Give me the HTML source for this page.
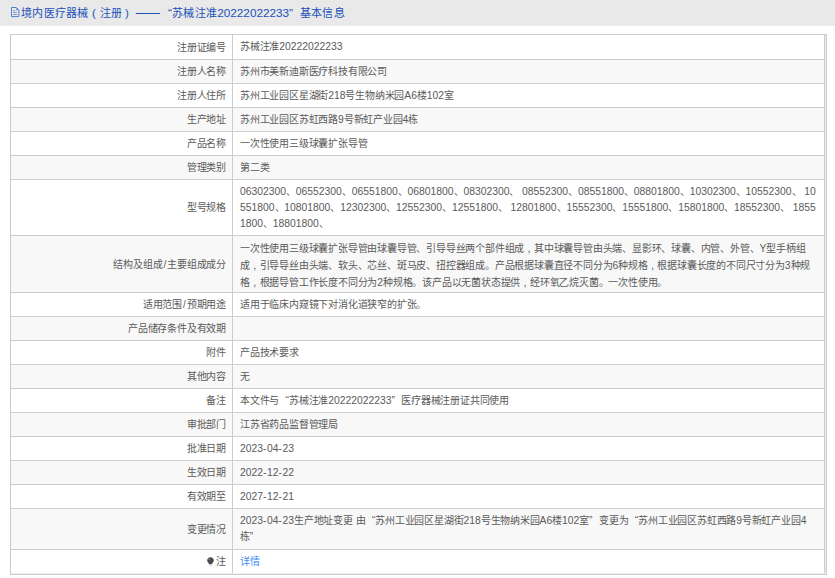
<!DOCTYPE html>
<html lang="zh-CN"><head><meta charset="utf-8">
<style>
html,body{margin:0;padding:0;background:#fff;width:835px;height:578px;overflow:hidden;position:relative;font-family:"Liberation Sans",sans-serif;}
.hdr{position:absolute;left:0;top:0;width:835px;height:25px;background:#e9e9e9;}
.hdr .doc{position:absolute;left:11px;top:7px;}
.hdr .t{position:absolute;left:21px;top:0;height:25px;line-height:25px;font-size:11px;letter-spacing:0.3px;color:#1a50ba;white-space:nowrap;}
.hdr .t .a{font-size:11.75px;letter-spacing:0;}
.hdr .t .ql,.hdr .t .qr{display:inline-block;width:10.6px;font-size:11.65px;letter-spacing:0;}
.hdr .t .pl,.hdr .t .pr{display:inline-block;width:11.3px;font-size:11.6px;letter-spacing:0;text-align:center;}
.hdr .t .pl{text-indent:-1px;}
.hdr .t .pr{text-indent:-3px;}
.hdr .t .dash{display:inline-block;width:27.4px;font-size:12px;letter-spacing:0;text-align:center;}
.box{position:absolute;left:10px;top:34px;width:817px;height:541px;box-sizing:border-box;border:1px solid #cbcbcb;}
.strip{position:absolute;left:825px;top:35px;width:1px;height:539px;background:#eaecf4;}
.row{position:absolute;left:11px;width:814px;box-sizing:border-box;border-top:1px solid #cdcdcd;border-right:1px solid #cdcdcd;font-size:10px;letter-spacing:-0.2px;color:#5a5a5a;}
.lab{position:absolute;left:0;top:0;width:222px;box-sizing:border-box;border-right:1px solid #cdcdcd;text-align:right;padding-right:6px;white-space:nowrap;}
.val{position:absolute;left:222px;top:0;width:590px;box-sizing:border-box;padding-left:7px;white-space:nowrap;}
.a{font-size:10.35px;letter-spacing:0;}
.h{font-size:10.4px;letter-spacing:0.5px;}
.ql,.qr{display:inline-block;width:9.8px;font-size:10.4px;letter-spacing:0;}
.ql{text-align:right;}
.qr{text-align:left;}
.val.one{line-height:24px;}
.val.last{line-height:23px;}
.val.multi{line-height:16px;padding-top:4px;}
.hl{position:absolute;left:0;top:25px;width:835px;height:1px;background:#eaedf5;}
.bl{position:absolute;left:11px;top:573px;width:815px;height:1px;background:#f0f2f9;}
.cm{display:inline-block;width:9.8px;text-align:center;font-size:11px;letter-spacing:0;}
.sl{letter-spacing:0;padding:0 1px;}
.link{color:#3d8cf8;}
.bulb{vertical-align:-1px;margin-right:2.3px;}
</style></head><body>
<div class="hdr"><svg class="doc" width="9" height="11" viewBox="0 0 9 11"><path d="M0.5 0.5H5.3L7.9 3.1V9.6H0.5Z" fill="none" stroke="#3a68cc" stroke-width="0.85"/><path d="M5.2 0.6V3.3H7.9Z" fill="#6d8fd8"/><path d="M2.1 3.6H4.2M2.1 5.5H5.9M2.1 7.5H5.9" stroke="#5a7fd4" stroke-width="0.8"/></svg><div class="t">境内医疗器械<span class="pl">(</span>注册<span class="pr">)</span><span class="dash">——</span><span class="ql">“</span>苏械注准<span class="a">20222022233</span><span class="qr">”</span>基本信息</div></div>
<div class="box"></div>
<div class="strip"></div><div class="hl"></div><div class="bl"></div>
<div class="row" style="top:34px;height:25px;background:#fff"><div class="lab" style="height:24px;line-height:25px">注册证编号</div><div class="val one" style="height:24px">苏械注准<span class="a">20222022233</span></div></div><div class="row" style="top:59px;height:24px;background:#f8f8f8"><div class="lab" style="height:23px;line-height:24px">注册人名称</div><div class="val one" style="height:23px">苏州市美新迪斯医疗科技有限公司</div></div><div class="row" style="top:83px;height:24px;background:#fff"><div class="lab" style="height:23px;line-height:24px">注册人住所</div><div class="val one" style="height:23px">苏州工业园区星湖街<span class="a">218</span>号生物纳米园<span class="a">A6</span>楼<span class="a">102</span>室</div></div><div class="row" style="top:107px;height:24px;background:#f8f8f8"><div class="lab" style="height:23px;line-height:24px">生产地址</div><div class="val one" style="height:23px">苏州工业园区苏虹西路<span class="a">9</span>号新虹产业园<span class="a">4</span>栋</div></div><div class="row" style="top:131px;height:24px;background:#fff"><div class="lab" style="height:23px;line-height:24px">产品名称</div><div class="val one" style="height:23px">一次性使用三级球囊扩张导管</div></div><div class="row" style="top:155px;height:24px;background:#f8f8f8"><div class="lab" style="height:23px;line-height:24px">管理类别</div><div class="val one" style="height:23px">第二类</div></div><div class="row" style="top:179px;height:56px;background:#fff"><div class="lab" style="height:55px;line-height:56px">型号规格</div><div class="val multi" style="height:55px"><span class="a">06302300</span>、<span class="a">06552300</span>、<span class="a">06551800</span>、<span class="a">06801800</span>、<span class="a">08302300</span>、<span class="a"> 08552300</span>、<span class="a">08551800</span>、<span class="a">08801800</span>、<span class="a">10302300</span>、<span class="a">10552300</span>、<span class="a"> 10</span><br><span class="a">551800</span>、<span class="a">10801800</span>、<span class="a">12302300</span>、<span class="a">12552300</span>、<span class="a">12551800</span>、<span class="a"> 12801800</span>、<span class="a">15552300</span>、<span class="a">15551800</span>、<span class="a">15801800</span>、<span class="a">18552300</span>、<span class="a"> 1855</span><br><span class="a">1800</span>、<span class="a">18801800</span>、</div></div><div class="row" style="top:235px;height:57px;background:#f8f8f8"><div class="lab" style="height:56px;line-height:57px">结构及组成<span class="sl">/</span>主要组成成分</div><div class="val multi" style="height:56px">一次性使用三级球囊扩张导管由球囊导管、引导导丝两个部件组成<span class="cm">,</span>其中球囊导管由头端、显影环、球囊、内管、外管、<span class="a">Y</span>型手柄组<br>成<span class="cm">,</span>引导导丝由头端、软头、芯丝、斑马皮、扭控器组成。产品根据球囊直径不同分为<span class="a">6</span>种规格<span class="cm">,</span>根据球囊长度的不同尺寸分为<span class="a">3</span>种规<br>格<span class="cm">,</span>根据导管工作长度不同分为<span class="a">2</span>种规格。该产品以无菌状态提供<span class="cm">,</span>经环氧乙烷灭菌。一次性使用。</div></div><div class="row" style="top:292px;height:24px;background:#fff"><div class="lab" style="height:23px;line-height:24px">适用范围<span class="sl">/</span>预期用途</div><div class="val one" style="height:23px">适用于临床内窥镜下对消化道狭窄的扩张。</div></div><div class="row" style="top:316px;height:24px;background:#f8f8f8"><div class="lab" style="height:23px;line-height:24px">产品储存条件及有效期</div><div class="val one" style="height:23px"></div></div><div class="row" style="top:340px;height:24px;background:#fff"><div class="lab" style="height:23px;line-height:24px">附件</div><div class="val one" style="height:23px">产品技术要求</div></div><div class="row" style="top:364px;height:24px;background:#f8f8f8"><div class="lab" style="height:23px;line-height:24px">其他内容</div><div class="val one" style="height:23px">无</div></div><div class="row" style="top:388px;height:24px;background:#fff"><div class="lab" style="height:23px;line-height:24px">备注</div><div class="val one" style="height:23px">本文件与<span class="ql">“</span>苏械注准<span class="a">20222022233</span><span class="qr">”</span>医疗器械注册证共同使用</div></div><div class="row" style="top:412px;height:24px;background:#f8f8f8"><div class="lab" style="height:23px;line-height:24px">审批部门</div><div class="val one" style="height:23px">江苏省药品监督管理局</div></div><div class="row" style="top:436px;height:24px;background:#fff"><div class="lab" style="height:23px;line-height:24px">批准日期</div><div class="val one" style="height:23px"><span class="a">2023</span><span class="h">-</span><span class="a">04</span><span class="h">-</span><span class="a">23</span></div></div><div class="row" style="top:460px;height:24px;background:#f8f8f8"><div class="lab" style="height:23px;line-height:24px">生效日期</div><div class="val one" style="height:23px"><span class="a">2022</span><span class="h">-</span><span class="a">12</span><span class="h">-</span><span class="a">22</span></div></div><div class="row" style="top:484px;height:24px;background:#fff"><div class="lab" style="height:23px;line-height:24px">有效期至</div><div class="val one" style="height:23px"><span class="a">2027</span><span class="h">-</span><span class="a">12</span><span class="h">-</span><span class="a">21</span></div></div><div class="row" style="top:508px;height:41px;background:#f8f8f8"><div class="lab" style="height:40px;line-height:41px">变更情况</div><div class="val multi" style="height:40px"><span class="a">2023</span><span class="h">-</span><span class="a">04</span><span class="h">-</span><span class="a">23</span>生产地址变更<span class="a"> </span>由<span class="ql">“</span>苏州工业园区星湖街<span class="a">218</span>号生物纳米园<span class="a">A6</span>楼<span class="a">102</span>室<span class="qr">”</span>变更为<span class="ql">“</span>苏州工业园区苏虹西路<span class="a">9</span>号新虹产业园<span class="a">4</span><br>栋<span class="qr">”</span></div></div><div class="row" style="top:549px;height:24px;background:#fff"><div class="lab" style="height:23px;line-height:23px"><svg class="bulb" width="7" height="9" viewBox="0 0 7 9"><path d="M3.5 0.2C1.6 0.2 0.2 1.6 0.2 3.3c0 1.1 0.6 1.9 1.2 2.5L1.9 7h3.2l0.5-1.2C6.2 5.2 6.8 4.4 6.8 3.3 6.8 1.6 5.4 0.2 3.5 0.2z" fill="#4a4a4a"/><rect x="2" y="7.4" width="3" height="1.3" fill="#c4c4c4"/><circle cx="2.1" cy="2.3" r="0.7" fill="#9a9a9a"/></svg>注</div><div class="val one last" style="height:23px"><span class="link">详情</span></div></div>
</body></html>
